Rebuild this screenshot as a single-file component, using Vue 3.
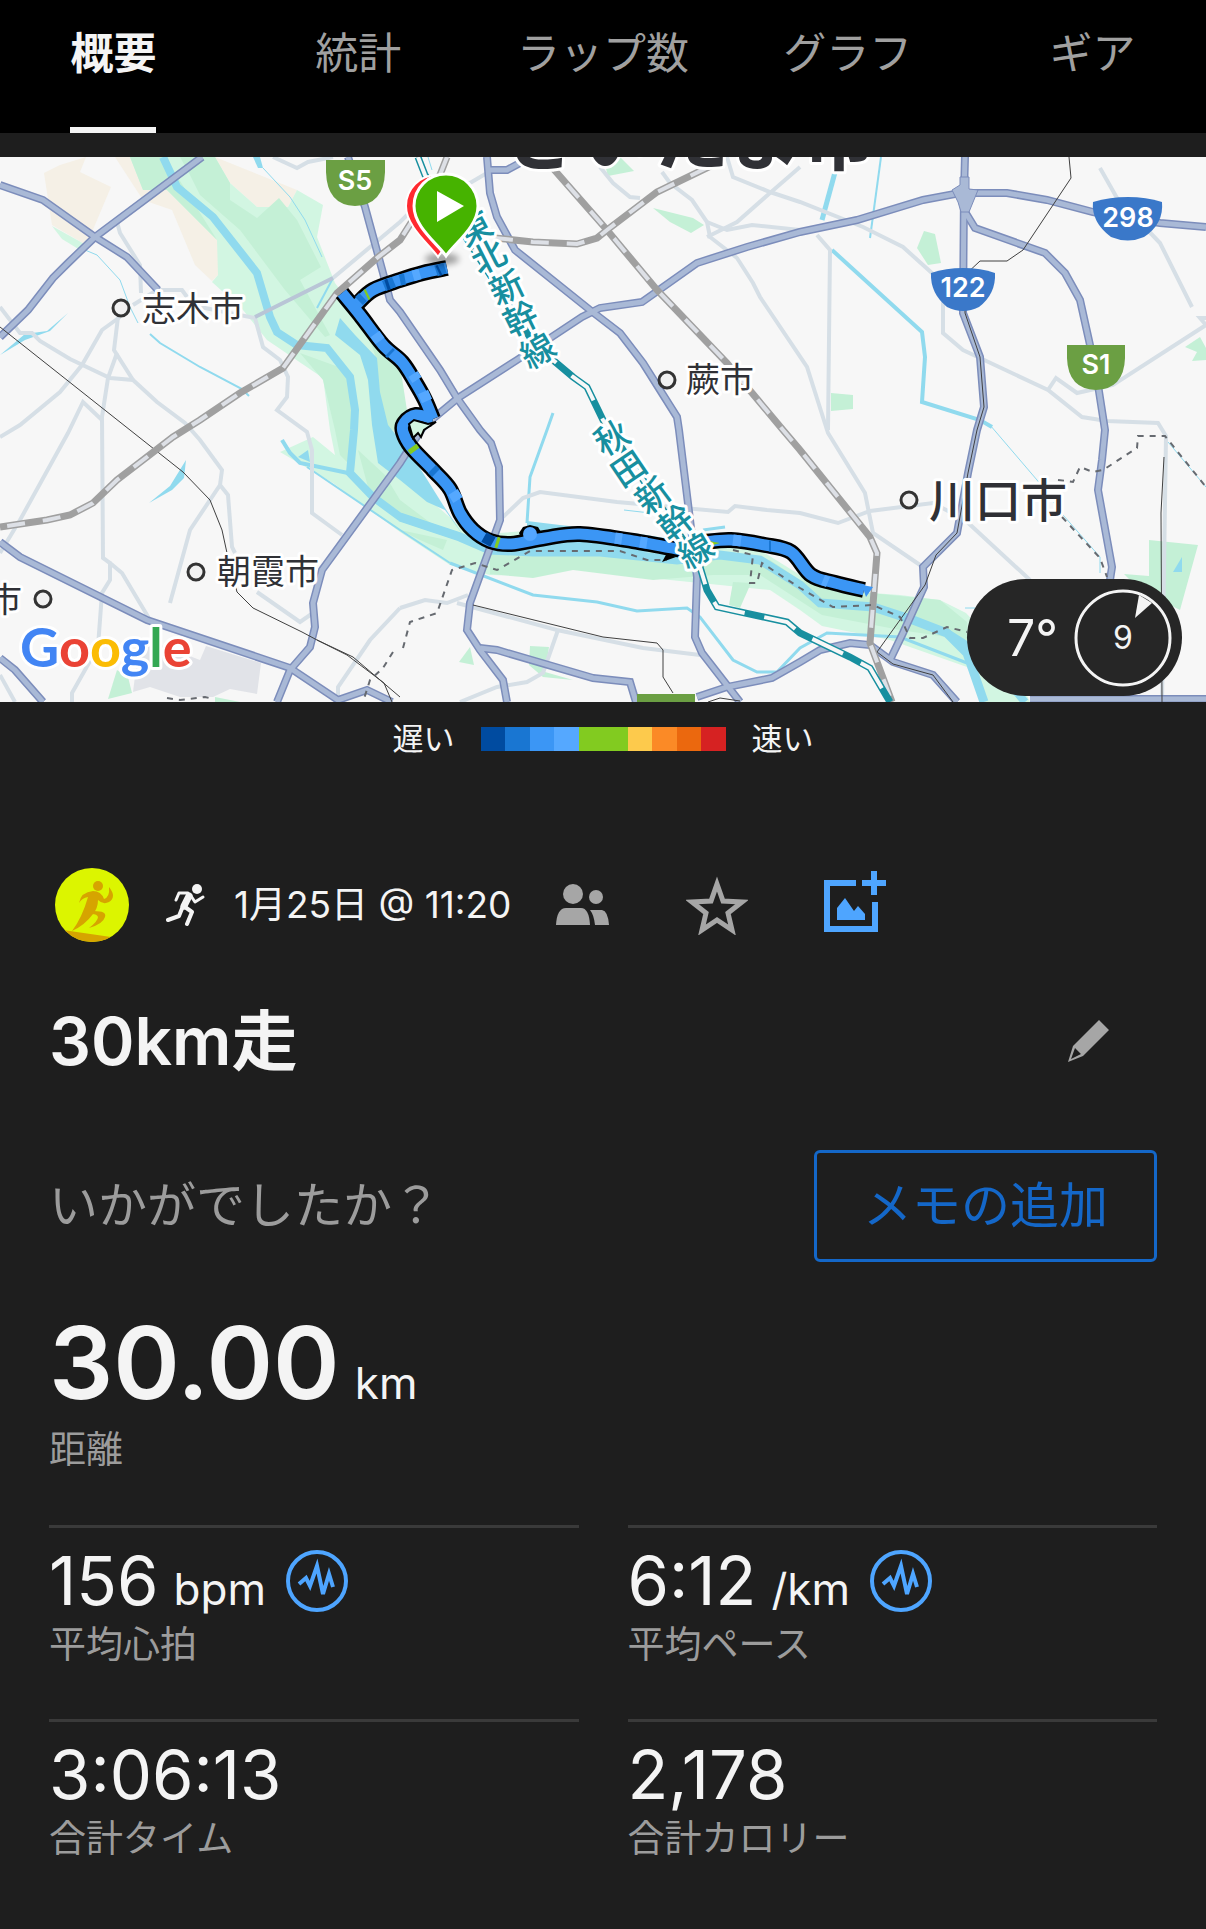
<template>
  <main class="activity">
    <nav class="tabs">
      <button
        v-for="tab in tabs"
        :key="tab"
        class="tab"
        :class="{ active: tab === activeTab }"
        @click="activeTab = tab"
      >
        <span class="tab-label">{{ tab }}</span>
      </button>
    </nav>

    <section class="map">
      <svg class="map-canvas" viewBox="0 157 1206 545">
        <rect y="157" width="1206" height="545" fill="#f7f7f7" />

        <!-- land use -->
        <g fill="#f5f0e6">
          <path d="M44 173L60 165L86 157L80 172L111 187L92 232L88 246L52 225Z" />
          <path d="M115 157L143 200L172 210L195 265L212 281L218 275L240 240L190 157Z" />
          <path d="M215 157L297 190L288 207L257 207L230 183Z" />
        </g>
        <path
          fill="#d2f6e2"
          d="M130 157L143 190L167 190L217 240L218 275L212 282L243 310L267 340L323 378L330 430L335 455L313 437L280 452L333 483L400 532L450 565L490 575L530 576L573 568L650 578L720 585L770 590L800 610L822 626L890 640L967 667L985 702L1030 702L1010 660L966 613L940 600L900 595L830 590L800 575L760 550L700 545L600 545L540 530L470 535L430 500L400 450L385 400L400 370L370 330L335 283L317 237L323 205L297 190L288 207L257 207L230 183L215 157Z"
        />
        <path fill="#d2f6e2" d="M52 226L88 246L80 250L62 239Z" />
        <g fill="#c4f0d6">
          <path d="M130 157L143 190L167 190L217 240L170 165L168 157Z" />
          <path d="M180 157H215L230 183L230 200L257 218L279 198L297 220L321 267L300 280L330 335L325 337L285 290L240 230L200 195L190 175Z" />
          <path d="M300 353L347 370L353 430L350 465L340 455L335 430L323 380Z" />
          <path d="M363 320L400 365L410 430L385 430L375 355Z" />
          <path d="M358 450L385 475L400 500L440 530L400 515L368 487Z" />
          <path d="M400 530L447 540L443 550L420 540Z" />
          <path d="M490 552H560L700 555L770 560L800 580L870 593L940 600L967 622L967 640L900 630L822 615L760 575L713 575L653 580L573 570L533 578L490 574Z" />
          <path d="M605 165L620 157L634 171L608 176Z" />
          <path d="M653 208L693 218L704 225L691 233L670 222Z" />
          <path d="M924 231L935 234L941 263L928 265L917 248Z" />
          <path d="M831 393L853 395V409L831 411Z" />
          <path d="M1185 347L1200 337L1206 348V360L1192 361L1197 352Z" />
          <path d="M1149 540L1198 545L1180 610L1140 590L1124 574L1149 576Z" />
          <path d="M733 582L751 583L740 608L729 605Z" />
          <path d="M530 646L549 647L545 672L573 680L543 677L529 665Z" />
          <path d="M459 662L470 647L474 665Z" />
          <path d="M117 670L128 677L132 693L108 699Z" />
          <path d="M215 697L240 702H215Z" />
        </g>
        <path fill="#e1e3e8" d="M140 637L200 660L206 646L261 663L257 694L230 689L213 697H180L150 687L133 692Z" />

        <!-- water -->
        <g fill="#90daee">
          <path d="M340 318L335 335L360 355L368 380L372 425L378 463L400 480L427 502L445 510L465 538L443 505L418 465L400 440L388 425L380 392L377 358L355 335Z" />
          <path d="M298 457L308 450L310 462Z" />
          <path d="M527 521L560 525L640 534L690 542V552H527Z" />
          <path d="M1182 557L1173 572H1182Z" />
          <path d="M253 157H260L263 168L258 168Z" />
          <path d="M0 355L25 334L47 331L68 313L50 331L25 340Z" />
          <path d="M186 460L184 478L172 490L149 503L170 486Z" />
        </g>
        <g class="stroke" stroke="#90daee">
          <path v-for="w in water" :key="w.d" :d="w.d" :stroke-width="w.w" />
        </g>

        <!-- roads -->
        <g class="stroke" stroke="#d6dfe6" stroke-width="4">
          <path v-for="d in minorRoads" :key="d" :d="d" />
        </g>
        <path class="stroke" stroke="#b9c5d6" stroke-width="4" d="M255 317L333 278" />
        <g class="stroke" stroke="#7c8dbb" stroke-width="8">
          <path v-for="d in majorRoads" :key="d" :d="d" />
        </g>
        <g class="stroke" stroke="#a9b9d6" stroke-width="5">
          <path v-for="d in majorRoads" :key="d" :d="d" />
        </g>
        <path fill="#a9b9d6" stroke="#7c8dbb" d="M952 190L960 185V177H969V189L978 190L969 212H961L958 202Z" />

        <!-- railways -->
        <g class="stroke" stroke="#404040" stroke-width="1">
          <path v-for="d in thinRails" :key="d" :d="d" />
        </g>
        <g class="stroke" stroke="#a0a0a0" stroke-width="7">
          <path v-for="d in railways" :key="d" :d="d" />
        </g>
        <g class="stroke" stroke="#dde0e6" stroke-width="4" stroke-dasharray="18 18">
          <path v-for="d in railways" :key="d" :d="d" />
        </g>
        <path class="stroke" stroke="#178f9f" stroke-width="7" :d="shinkansen" />
        <path class="stroke" stroke="#f7f7f7" stroke-width="4" stroke-dasharray="34 20" :d="shinkansen" />
        <g class="stroke" stroke="#666a70" stroke-width="2" stroke-dasharray="6 6">
          <path v-for="d in borders" :key="d" :d="d" />
        </g>

        <!-- recorded track -->
        <g class="track" stroke="#000" stroke-width="16">
          <path v-for="d in track" :key="d" :d="d" />
        </g>
        <path d="M519 533L523 527L530 525L538 527L541 532L534 545H524Z" fill="#000" />
        <g class="track" stroke="#3b96f5" stroke-width="11">
          <path v-for="d in track" :key="d" :d="d" />
        </g>
        <circle cx="530" cy="534" r="7" fill="#54a6ff" />
        <g class="track" stroke="#55a8ff" stroke-width="11">
          <path d="M375 334L380 341M413 374L417 380M423 392L427 401M413 276L420 274M453 492L458 500M615 538L622 539M640 542L647 543M733 540L741 541M823 580L828 582" />
        </g>
        <g class="track" stroke="#1976d2" stroke-width="11">
          <path d="M384 286L394 282M400 280L405 279M436 271L445 268M389 352L391 354M432 469L436 473M359 301L363 297M769 546L771 546" />
        </g>
        <path class="track" stroke="#004ba0" stroke-width="11" d="M484 537L493 542M438 271L440 270M386 285L389 284" />
        <path class="track" stroke="#82cb20" stroke-width="11" d="M496 542L499 543M366 295L368 294M412 447L415 451" />
        <path fill="#d2f6e2" stroke="#000" stroke-width="2" d="M409 424L414 420L421 422L428 424L436 422L424 430L421 437L418 433L413 438Z" />
        <path fill="#82cb20" d="M709 541L720 543L709 546Z" />
        <path fill="#000" d="M667 553L676 557L662 562Z" />
        <path fill="#3b96f5" d="M862 585L873 587L866 597Z" />

        <!-- place names -->
        <g class="place">
          <text x="504" y="164" font-size="75" font-weight="700">さいたま市</text>
          <text x="142" y="321" font-size="34">志木市</text>
          <text x="686" y="392" font-size="34">蕨市</text>
          <text x="929" y="517" font-size="46" font-weight="500">川口市</text>
          <text x="217" y="584" font-size="34">朝霞市</text>
          <text x="-12" y="612" font-size="34">市</text>
        </g>
        <g fill="#f1f1f1" stroke="#333" stroke-width="3">
          <circle v-for="c in towns" :key="c.x" :cx="c.x" :cy="c.y" r="8" />
        </g>
        <g class="line-name">
          <text
            v-for="c in lineNames"
            :key="c.x"
            :transform="`translate(${c.x} ${c.y}) rotate(${c.r})`"
            y="12"
          >{{ c.t }}</text>
        </g>

        <!-- start and finish pins -->
        <ellipse cx="442" cy="259" rx="17" ry="6" fill="#000" opacity="0.35" class="pin-shadow" />
        <path fill="#ff2a30" stroke="#fff" stroke-width="2" d="M438 257C430 245 406 227 406 206A31 31 0 0 1 437 175A31 31 0 0 1 468 206C468 227 445 245 438 257Z" />
        <path fill="#46b300" stroke="#fff" stroke-width="3" d="M446 256C438 244 414 227 414 206A32 32 0 0 1 478 206C478 227 454 244 446 256Z" />
        <path fill="#fff" d="M437 191V222L464 206Z" />

        <!-- route shields -->
        <g fill="#3a78c9">
          <path d="M1093 202Q1110 197 1128 197Q1146 197 1162 202Q1164 224 1144 237Q1128 244 1111 237Q1091 222 1093 202Z" />
          <path d="M931 273Q946 268 963 268Q981 268 995 273Q996 294 979 307Q963 315 947 307Q930 293 931 273Z" />
        </g>
        <g fill="#6b9f43">
          <path d="M326 160H385V172Q384 205 355 206Q327 205 326 172Z" />
          <path d="M1067 345H1125V358Q1124 389 1096 390Q1068 389 1067 358Z" />
          <path d="M637 694H695V702H637Z" />
        </g>
        <g class="shield-text">
          <text x="1128" y="227">298</text>
          <text x="963" y="297">122</text>
          <text x="355" y="190">S5</text>
          <text x="1096" y="374">S1</text>
        </g>

        <text class="google" x="20" y="667">
          <tspan fill="#4285f4">G</tspan><tspan fill="#ea4335">o</tspan><tspan fill="#fbbc04">o</tspan><tspan fill="#4285f4">g</tspan><tspan fill="#34a853">l</tspan><tspan fill="#ea4335">e</tspan>
        </text>
      </svg>

      <div class="weather">
        <span class="temperature">7°</span>
        <div class="wind">
          <svg class="wind-dial" viewBox="0 0 98 98">
            <circle cx="49" cy="49" r="47" fill="none" stroke="#f4f4f4" stroke-width="3" />
            <path fill="#f4f4f4" d="M65 6L78 14L61 29Z" />
          </svg>
          <span class="wind-speed">9</span>
        </div>
      </div>
    </section>

    <div class="legend">
      <span>遅い</span>
      <div class="legend-bar">
        <i v-for="(color, i) in paceColors" :key="i" :style="{ background: color }"></i>
      </div>
      <span>速い</span>
    </div>

    <section class="meta">
      <svg class="avatar" viewBox="0 0 74 74">
        <defs>
          <clipPath id="avatar-clip"><circle cx="37" cy="37" r="37" /></clipPath>
        </defs>
        <g clip-path="url(#avatar-clip)">
          <rect width="74" height="74" fill="#dcf500" />
          <g fill="#d6a400">
            <path d="M8 62L56 69L56 74H8Z" />
            <ellipse cx="43" cy="18" rx="5" ry="5" />
            <path d="M24 35Q26 24 38 23Q46 23 49 31Q55 29 54 19Q62 29 54 34Q48 37 43 32Q43 40 38 46Q30 57 17 63Q27 50 33 29Q27 30 24 35Z" />
            <path d="M39 43Q52 43 50 49Q48 56 34 60Q43 53 43 49Q42 46 37 46Z" />
          </g>
        </g>
      </svg>
      <svg class="run" viewBox="0 0 40 42">
        <ellipse cx="31" cy="5" rx="5" ry="5" fill="#f4f4f4" />
        <g class="stroke" stroke="#f4f4f4" stroke-linecap="round" stroke-linejoin="round">
          <path stroke-width="7" d="M23 12L18 22" />
          <path stroke-width="3" d="M22 9L13 9L10 16" />
          <path stroke-width="3" d="M25 12L29 18L37 13" />
          <path stroke-width="4" d="M19 23L26 28L21 40" />
          <path stroke-width="4" d="M17 22L13 32L2 36" />
        </g>
      </svg>
      <time class="date">1月25日 @ 11:20</time>
      <button class="icon-button" aria-label="公開範囲">
        <svg class="people" viewBox="0 0 54 42" fill="#a6a6a6">
          <circle cx="17" cy="10" r="10" />
          <circle cx="40" cy="13" r="7" />
          <path d="M0 41Q1 24 10 24H25Q33 24 34 41Z" />
          <path d="M34 26H46Q52 27 53 41H39Q38 31 34 26Z" />
        </svg>
      </button>
      <button class="icon-button" aria-label="お気に入り">
        <svg class="star" viewBox="0 0 62 60">
          <path
            fill="none"
            stroke="#a6a6a6"
            stroke-width="5"
            d="M31 9L37 26L56 27L42 38L46 55L31 45L16 55L20 38L6 27L25 26Z"
          />
        </svg>
      </button>
      <button class="icon-button" aria-label="写真を追加">
        <svg class="photo" viewBox="0 0 63 68">
          <path class="stroke" stroke="#4ea5ff" stroke-width="6" d="M32 12H3V58H51V31" />
          <path class="stroke" stroke="#4ea5ff" stroke-width="6" d="M50 0V24M38 12H62" />
          <path fill="#4ea5ff" d="M13 49V37L21 27L30 40L34 35L41 43V49Z" />
        </svg>
      </button>
    </section>

    <section class="title-row">
      <h1>30km走</h1>
      <button class="icon-button" aria-label="名前を編集">
        <svg class="pencil" viewBox="0 0 42 42">
          <path fill="#a6a6a6" d="M31 0L41 10L15 36L0 42L5 26ZM7 28L3 39L13 34Z" fill-rule="evenodd" />
        </svg>
      </button>
    </section>

    <section class="note-row">
      <p>いかがでしたか？</p>
      <button class="note-button">メモの追加</button>
    </section>

    <dl class="distance">
      <dd class="value">30.00<span class="unit">km</span></dd>
      <dt>距離</dt>
    </dl>

    <dl class="stats">
      <div v-for="s in stats" :key="s.label" class="stat">
        <dd class="value">
          {{ s.value }}<span v-if="s.unit" class="unit">{{ s.unit }}</span>
          <svg v-if="s.zone" class="pulse" viewBox="0 0 62 62">
            <g class="stroke" stroke="#4ea5ff" stroke-width="4">
              <circle cx="31" cy="31" r="29" />
              <path d="M13 34L20 28L24 36L31 16L37 44L43 24L47 37" />
            </g>
          </svg>
        </dd>
        <dt>{{ s.label }}</dt>
      </div>
    </dl>
  </main>
</template>

<script setup>
import { ref } from 'vue'

const tabs = ['概要', '統計', 'ラップ数', 'グラフ', 'ギア']
const activeTab = ref('概要')

const paceColors = [
  '#004ba0', '#1976d2', '#3b96f5', '#55a8ff', '#82cb20',
  '#82cb20', '#fdca4c', '#fb8a26', '#eb680e', '#d62222'
]

const stats = [
  { value: '156', unit: 'bpm', label: '平均心拍', zone: true },
  { value: '6:12', unit: '/km', label: '平均ペース', zone: true },
  { value: '3:06:13', label: '合計タイム' },
  { value: '2,178', label: '合計カロリー' }
]

const water = [
  { w: 8, d: 'M163 157L177 187L213 217L257 273L270 317L277 332L297 345L327 348L350 377L355 410L354 430L350 473L373 497L400 517L460 537' },
  { w: 9, d: 'M400 517L460 537L490 550L533 552L600 552L677 560L720 555L760 560L800 585L820 603L873 607L913 620L947 633L967 653L984 702' },
  { w: 8, d: 'M947 633L990 660L1025 702' },
  { w: 4, d: 'M282 440L290 453L300 463L348 473' },
  { w: 2, d: 'M307 467L400 530L450 563' },
  { w: 3, d: 'M450 563L533 595L597 602L637 611L687 608L700 617L733 660L757 672H777L800 648L827 633L900 637L967 663' },
  { w: 1, d: 'M85 250L97 255L120 280L130 307L138 323' },
  { w: 2, d: 'M150 334L160 343L200 367L242 389L249 396' },
  { w: 1, d: 'M263 168L290 197L305 220L322 257' },
  { w: 2, d: 'M333 278L317 308' },
  { w: 3, d: 'M553 413L547 430L530 477L527 523' },
  { w: 1, d: 'M624 510L650 513' },
  { w: 3, d: 'M703 530L725 527' },
  { w: 5, d: 'M837 165L822 220' },
  { w: 2, d: 'M881 157L870 238' },
  { w: 4, d: 'M832 250L922 332L925 357L922 402L980 420L992 427' },
  { w: 1, d: 'M990 425L1037 480L1063 515L1100 557V573M1168 442L1206 487M965 608H975' },
  { w: 1, d: 'M428 157L432 170' }
]

const minorRoads = [
  'M117 222L120 233L140 265L141 293',
  'M0 307L20 333H32L40 341L70 359L110 378L133 380L157 402L185 423L200 440L222 470L220 485L190 530L170 603',
  'M220 485L228 495L232 547L235 553',
  'M120 317L102 330L82 365L60 392L20 425L0 437',
  'M118 317L114 350L133 380',
  'M117 353L108 378L102 417L103 558L110 563V580L102 593L98 647L72 693V702',
  'M110 563L122 573L150 620',
  'M102 420L83 402L68 433L20 520L0 553',
  'M133 305L157 290H182L187 297',
  'M200 307L255 318L263 347L280 360L288 377L287 397L277 410L307 432L312 450V513L342 535',
  'M333 278L400 222L440 183L470 183L487 173',
  'M273 157L297 168L308 162L333 157',
  'M257 592L300 622L313 613',
  'M400 608L370 640L338 687V700',
  'M400 608L425 600L447 603L468 595',
  'M503 517L523 498L540 492L617 502L728 512L735 506L767 510L800 513L838 523L870 511L933 503L965 520L1030 580',
  'M457 603L557 630L643 648L700 655',
  'M558 630L543 673L527 682L497 687L460 702',
  'M600 167L613 183L630 197L640 198',
  'M662 172L670 183L692 200L707 222L710 237L737 258L753 283L760 297L807 367L828 433L865 493L873 533L923 567',
  'M727 157L733 177L770 192L800 202L863 227L903 247L943 283V333L963 350L1048 390L1082 417L1107 421L1158 423L1166 436L1162 702',
  'M800 167L770 193L737 222L707 237',
  'M707 222L727 230L752 225L800 230',
  'M817 235L830 250L828 430',
  'M1100 168L1117 198L1160 243L1192 307',
  'M1048 390L1056 378L1077 393L1113 385L1206 325L1200 318H1206',
  'M0 675L15 702'
]

const majorRoads = [
  'M0 185L43 200L95 237L127 257L158 290',
  'M202 157L95 237L68 263L53 278L28 310L0 337',
  'M348 157L365 207L383 273L390 300L400 312L440 370L457 398L480 430L491 443L499 467L500 520L470 603L467 630L480 650L503 680L507 702',
  'M480 648L497 650L593 678L630 682L636 702',
  'M487 157L490 193L497 217L515 250L590 310L620 333L643 363L677 417L679 430L697 577L695 637L702 653L740 702',
  'M490 170H507L520 163',
  'M277 702L290 670L310 647L315 627L313 603L322 570L400 463L423 427L458 398L517 360L582 317L600 308L642 302L697 263L747 247L800 232L857 220L923 200L960 193H1007L1047 200L1093 212L1160 223L1206 227',
  'M965 157L964 193L963 313L980 357L984 407L977 430L968 473L957 533L923 567L924 587L903 633L890 660',
  'M964 210L975 228L1045 253L1065 273L1080 300L1090 345L1098 385L1105 430L1102 460L1098 490L1112 567L1110 580',
  'M0 542L20 557L147 620L290 668L338 700L367 690L392 702',
  'M0 658L15 670L43 702',
  'M697 697L727 687L772 678L800 662L820 650L850 643L870 645L893 662L933 675L957 702',
  'M1030 699H1206'
]

const thinRails = [
  'M0 327L183 472L210 500L222 530L227 553L237 592L253 608L302 632L317 640L353 657L400 697',
  'M317 640L347 655L384 683L392 702',
  'M473 605L603 637L657 643L663 650V677L673 693',
  'M1069 157L1071 178L1023 250L1007 261H980L965 275V313L980 357L984 407L977 430L968 473L957 533L936 555L925 585L877 652L893 664L933 675L953 702',
  'M1164 457L1161 513L1162 702',
  'M708 702L720 698L740 701'
]

const railways = [
  'M447 157L438 180L400 240L377 258L337 293L283 368L240 393L200 420L173 437L117 480L93 503L70 515L47 520L0 527',
  'M543 157L607 230L657 290L727 363L783 430L800 450L870 537L877 553L870 643L892 702',
  'M495 238L533 242L577 244L597 238L607 230L657 192L723 160'
]

const shinkansen =
  'M418 157L425 175L455 220L538 350L553 360L573 377L587 387L603 420L690 550L700 567L707 590L717 607L787 622L800 633L850 657L870 668L890 702'

const borders = [
  'M403 648L410 622L437 613L452 570L475 563L497 570L530 551H620L647 560H667',
  'M733 550L753 555L750 583H757L762 563L800 588L833 607L873 605L900 617L910 638H923L947 627L967 632',
  'M1058 480L1073 482L1080 467L1093 472L1103 470L1137 448L1138 436H1165L1206 487',
  'M1062 517L1100 558L1107 577',
  'M393 652L383 668L370 680L363 702',
  'M167 698L180 700L205 697L213 699'
]

// turns a list of points into a rounded path (Catmull-Rom as cubic curves)
function smooth(points) {
  let d = `M${points[0][0]} ${points[0][1]}`
  for (let i = 0; i < points.length - 1; i++) {
    const p0 = points[i - 1] || points[i]
    const p1 = points[i]
    const p2 = points[i + 1]
    const p3 = points[i + 2] || p2
    const c1 = [p1[0] + (p2[0] - p0[0]) / 6, p1[1] + (p2[1] - p0[1]) / 6]
    const c2 = [p2[0] - (p3[0] - p1[0]) / 6, p2[1] - (p3[1] - p1[1]) / 6]
    d += `C${c1[0]} ${c1[1]} ${c2[0]} ${c2[1]} ${p2[0]} ${p2[1]}`
  }
  return d
}

const track = [
  smooth([[447, 268], [423, 273], [400, 280], [373, 290], [357, 304]]),
  smooth([[342, 293], [360, 315], [383, 345], [402, 362], [415, 382], [425, 400], [433, 419]]),
  smooth([[433, 419], [416, 415], [404, 423], [403, 432], [411, 447], [433, 470], [450, 489], [460, 513], [473, 530], [490, 541], [511, 544], [545, 538], [580, 534], [633, 541], [682, 550]]),
  smooth([[705, 542], [731, 540], [765, 545], [791, 552], [811, 575], [835, 583], [864, 590]])
]

const towns = [
  { x: 121, y: 308 },
  { x: 667, y: 380 },
  { x: 909, y: 500 },
  { x: 196, y: 572 },
  { x: 43, y: 599 }
]

// the two Shinkansen names follow the line one character at a time
const lineNames = [
  { t: '東', x: 475, y: 229, r: -28 },
  { t: '北', x: 489, y: 257, r: -27 },
  { t: '新', x: 507, y: 288, r: -26 },
  { t: '幹', x: 521, y: 319, r: -26 },
  { t: '線', x: 538, y: 351, r: -30 },
  { t: '秋', x: 612, y: 438, r: -30 },
  { t: '田', x: 629, y: 469, r: -34 },
  { t: '新', x: 653, y: 496, r: -37 },
  { t: '幹', x: 676, y: 523, r: -38 },
  { t: '線', x: 696, y: 551, r: -30 }
]
</script>

<style>
body {
  margin: 0;
  background: #1e1e1e;
}
</style>

<style scoped>
.activity {
  min-height: 100vh;
  overflow: hidden;
  background: #1e1e1e;
  color: #f4f4f4;
  font-family: Inter, "Noto Sans CJK JP", sans-serif;
}

button {
  padding: 0;
  border: none;
  background: none;
  font-family: inherit;
  cursor: pointer;
}

/* the first and last tab run slightly past the screen edge */
.tabs {
  display: grid;
  grid-template-columns: repeat(5, 1fr);
  height: 133px;
  margin: 0 -9px 24px;
  background: #000;
}

.tab {
  display: flex;
  justify-content: center;
  color: #a0a0a0;
  font-size: 43px;
  line-height: 64px;
}

.tab-label {
  box-sizing: border-box;
  height: 133px;
  padding-top: 21px;
  border-bottom: 6px solid transparent;
}

.tab.active {
  color: #f4f4f4;
  font-weight: 700;
}

.tab.active .tab-label {
  border-color: #f4f4f4;
}

.map {
  position: relative;
}

.map-canvas {
  display: block;
  width: 100%;
  height: auto;
}

.stroke {
  fill: none;
}

.track {
  fill: none;
  stroke-linejoin: round;
}

.pin-shadow {
  filter: blur(3px);
}

.place {
  fill: #303136;
  stroke: #fff;
  stroke-width: 6px;
  stroke-linejoin: round;
  paint-order: stroke;
  font-family: "Noto Sans CJK JP", sans-serif;
}

.line-name {
  fill: #178f9f;
  stroke: #fff;
  stroke-width: 6px;
  stroke-linejoin: round;
  paint-order: stroke;
  font-family: "Noto Sans CJK JP", sans-serif;
  font-size: 34px;
  font-weight: 500;
  text-anchor: middle;
}

.shield-text {
  fill: #fff;
  font-size: 27px;
  font-weight: 600;
  text-anchor: middle;
}

.google {
  stroke: #fff;
  stroke-width: 6px;
  stroke-linejoin: round;
  paint-order: stroke;
  font-family: Lato, sans-serif;
  font-size: 54px;
  font-weight: 700;
}

.weather {
  position: absolute;
  right: 24px;
  bottom: 6px;
  display: flex;
  align-items: center;
  justify-content: flex-end;
  gap: 16px;
  box-sizing: border-box;
  width: 215px;
  height: 117px;
  padding-right: 10px;
  border-radius: 59px;
  background: #262626;
}

.temperature {
  font-size: 50px;
}

.wind {
  display: grid;
  place-items: center;
}

.wind-dial,
.wind-speed {
  grid-area: 1 / 1;
}

.wind-dial {
  width: 98px;
}

.wind-speed {
  font-size: 32px;
}

.legend {
  display: flex;
  align-items: center;
  justify-content: center;
  gap: 26px;
  height: 74px;
  font-size: 31px;
  line-height: 32px;
}

.legend-bar {
  display: flex;
  width: 245px;
  height: 24px;
}

.legend-bar i {
  flex: 1;
}

.meta {
  display: flex;
  align-items: center;
  height: 74px;
  padding: 0 55px;
  margin-top: 92px;
}

.avatar {
  width: 74px;
}

.run {
  width: 40px;
  margin: 0 28px 0 37px;
}

.date {
  width: 322px;
  font-size: 37px;
  line-height: 44px;
  white-space: nowrap;
}

.icon-button {
  display: flex;
}

.people {
  width: 54px;
}

.star {
  width: 62px;
  margin: 0 76px;
}

.photo {
  width: 63px;
}

.title-row {
  display: flex;
  align-items: center;
  justify-content: space-between;
  height: 96px;
  padding: 0 96px 0 49px;
  margin-top: 51px;
}

h1 {
  margin: 0;
  font-size: 66px;
  font-weight: 600;
  line-height: 96px;
}

.pencil {
  width: 42px;
}

.note-row {
  display: flex;
  align-items: center;
  justify-content: space-between;
  padding: 0 49px;
  margin-top: 61px;
}

.note-row p {
  margin: 0;
  color: #9c9c9c;
  font-size: 49px;
  line-height: 64px;
}

.note-button {
  padding: 0 46px;
  border: 3px solid #1467c8;
  border-radius: 6px;
  color: #1467c8;
  font-size: 49px;
  line-height: 106px;
}

dl,
dd {
  margin: 0;
}

.value {
  display: flex;
  align-items: baseline;
  font-size: 67px;
  line-height: 80px;
}

.unit {
  margin-left: 15px;
  font-size: 44px;
  line-height: 44px;
}

dt {
  color: #9c9c9c;
  font-size: 37px;
  line-height: 44px;
}

.distance {
  padding: 0 49px;
  margin: 44px 0 53px;
}

.distance .value {
  font-size: 101px;
  font-weight: 600;
  line-height: 112px;
}

.distance .unit {
  font-weight: 400;
}

.distance dt {
  margin-top: 10px;
}

.stats {
  display: grid;
  grid-template-columns: 1fr 1fr;
  column-gap: 49px;
  padding: 0 49px;
}

.stat {
  padding: 13px 0 52px;
  border-top: 3px solid #3a3a3a;
}

.stat dt {
  margin-top: 2px;
}

.pulse {
  align-self: center;
  width: 62px;
  margin-left: 20px;
}
</style>
